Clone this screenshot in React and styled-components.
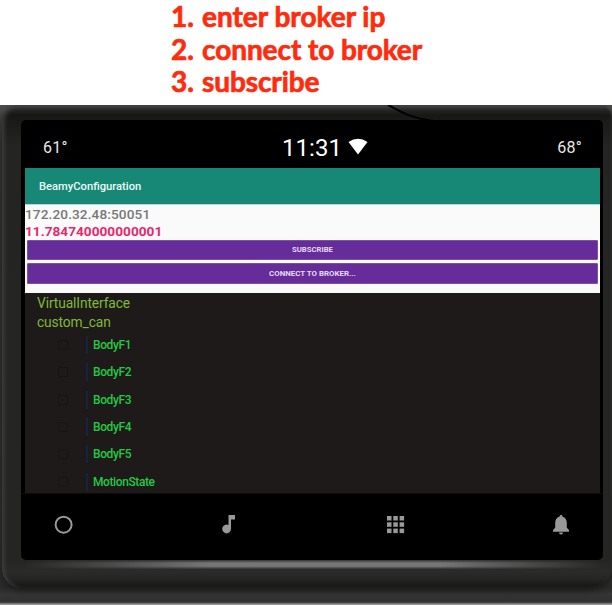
import React from "react";
import styled, { createGlobalStyle } from "styled-components";

const GlobalStyle = createGlobalStyle`
  * { box-sizing: border-box; }
  body { margin: 0; background: #fff; font-family: Roboto, sans-serif; overflow: hidden; }
`;

const Page = styled.main`
  width: 612px;
  height: 605px;
  display: flex;
  flex-direction: column;
  background: #fff;
`;

const Steps = styled.ol`
  list-style: none;
  margin: 0;
  padding: 0 0 0 171px;
  height: 105px;
  flex: none;
  color: #ff2b0d;
  font: 700 28px/32px Lato, sans-serif;
  -webkit-text-stroke: 0.7px #ff2b0d;
`;

const Step = styled.li`
  display: grid;
  grid-template-columns: 31px auto;
  height: 32.7px;
  white-space: nowrap;
`;

const StepText = styled.span`
  letter-spacing: ${(p) => p.$spacing}px;
`;

const Bezel = styled.section`
  position: relative;
  height: 500px;
  padding: 15px 9px 0 21px;
  overflow: hidden;
  background: linear-gradient(#4c4c4c, #383838 40px, #303030 460px, #292929 482px, #353535 490px, #303030 497px, #888 499px, #aaa);
`;

const BezelFace = styled.div`
  position: absolute;
  inset: 1px 0 17px 2px;
  border-radius: 17px 12px 22px 20px;
  background: linear-gradient(#444 0, #252525 4px, #171715 9px, #1a1a18 14px, #242523 40px, #252624 455px, #2b2b2b 465px, #252525 473px, #181816 480px);
  box-shadow: inset 4px 0 4px -2px #404040, inset -3px 0 3px -2px #2b2c29, 0 2px 7px #181816;
`;

const LowerShine = styled.div`
  position: absolute;
  left: 24px;
  right: 9px;
  top: 455px;
  height: 9px;
  background: linear-gradient(#333, #777 35%, #757575 70%, #303030);
  mask-image: linear-gradient(90deg, transparent, #000 32%, #000 72%, transparent);
`;

const Cable = styled.svg`
  position: absolute;
  left: 386px;
  top: 0;
`;

const Screen = styled.div`
  position: relative;
  width: 582px;
  height: 440px;
  display: flex;
  flex-direction: column;
  border-radius: 5px;
  background: #000;
  overflow: hidden;
`;

const StatusBar = styled.header`
  height: 48px;
  flex: none;
  display: grid;
  grid-template-columns: 1fr auto 1fr;
  align-items: center;
  padding: 7px 21px 0 22px;
`;

const Temperature = styled.span`
  color: #e8e8e8;
  font-size: 16px;
  line-height: 20px;
  letter-spacing: 0.3px;
  text-align: ${(p) => p.$align || "left"};
`;

const Clock = styled.div`
  display: flex;
  align-items: center;
  gap: 6px;
  padding-left: 25px;
  color: #fff;
  font-size: 24px;
  line-height: 28px;
  svg { transform: translateY(-1px); }
`;

const AppWindow = styled.div`
  width: 575px;
  margin-left: 4px;
  height: 325px;
  flex: none;
  display: flex;
  flex-direction: column;
  background: #1e1a19;
`;

const TitleBar = styled.h1`
  margin: 0;
  height: 36px;
  padding: 1px 0 0 14px;
  background: #188876;
  color: #eafaf7;
  font-size: 11.2px;
  line-height: 36px;
  font-weight: 500;
  letter-spacing: 0;
`;

const Connection = styled.div`
  height: 89px;
  background: #fafafa;
  padding: 2px 2px 0;
  border-top: 1px solid #b6d8d3;
`;

const Reading = styled.div`
  height: ${(p) => (p.$strong ? 18 : 15)}px;
  margin-left: -2px;
  color: ${(p) => (p.$strong ? "#e5296f" : "#777")};
  font-size: 13.6px;
  line-height: ${(p) => (p.$strong ? 18 : 15)}px;
  font-weight: ${(p) => (p.$strong ? 700 : 500)};
  letter-spacing: ${(p) => (p.$strong ? 0.04 : 0.12)}px;
`;

const Action = styled.button`
  display: block;
  width: 571px;
  height: ${(p) => p.$height}px;
  margin: 0 0 3px;
  padding: 0;
  border: 1px solid #7a50aa;
  border-radius: 1px;
  background: #652c9a;
  color: #e6daf2;
  font: 700 ${(p) => p.$size}px/1 Roboto, sans-serif;
`;

const Tree = styled.div`
  height: 200px;
  padding: 1px 0 0 12px;
  overflow: hidden;
`;

const Branch = styled.div`
  height: 18.5px;
  color: #80b936;
  font-size: 13.8px;
  line-height: 18.5px;
  letter-spacing: ${(p) => p.$spacing}px;
`;

const Signal = styled.label`
  display: grid;
  grid-template-columns: 20px 29px 7px auto;
  align-items: center;
  height: 27.45px;
  color: #22c944;
  font-size: 12px;
  font-weight: 500;
`;

const CheckSquare = styled.span`
  width: 10px;
  height: 10px;
  margin-left: 21px;
  border: 1px solid #171414;
  border-radius: 1px;
`;

const Divider = styled.i`
  width: 2px;
  height: 18px;
  margin-left: 29px;
  background: #12263d;
`;

const SignalName = styled.span`
  letter-spacing: -0.4px;
`;

const NavBar = styled.nav`
  flex: 1;
  display: flex;
  justify-content: space-between;
  align-items: flex-start;
  padding: 20px 32px 0 33px;
  border-top: 1px solid #0b0b0b;
  svg { display: block; }
`;

const signals = ["BodyF1", "BodyF2", "BodyF3", "BodyF4", "BodyF5", "MotionState"];

export default function App() {
  return (
    <>
      <GlobalStyle />
      <Page>
        <Steps>
          <Step><span>1.</span><StepText $spacing={0}>enter broker ip</StepText></Step>
          <Step><span>2.</span><StepText $spacing={-0.08}>connect to broker</StepText></Step>
          <Step><span>3.</span><StepText $spacing={-0.1}>subscribe</StepText></Step>
        </Steps>
        <Bezel>
          <BezelFace />
          <LowerShine />
          <Cable width="50" height="16" fill="none" stroke="#000" strokeWidth="2">
            <path d="M2 0C13 6 24 13 48 16" />
          </Cable>
          <Screen>
            <StatusBar>
              <Temperature>61°</Temperature>
              <Clock>
                <span>11:31</span>
                <svg width="20" height="17" viewBox="0 0 20 17"><path d="M.5 4Q10-2.5 19.5 4L10 16.5Z" fill="#fff" /></svg>
              </Clock>
              <Temperature $align="right">68°</Temperature>
            </StatusBar>
            <AppWindow>
              <TitleBar>BeamyConfiguration</TitleBar>
              <Connection>
                <Reading>172.20.32.48:50051</Reading>
                <Reading $strong>11.784740000000001</Reading>
                <Action $height={20} $size={7.7}>SUBSCRIBE</Action>
                <Action $height={21} $size={7.9}>CONNECT TO BROKER...</Action>
              </Connection>
              <Tree>
                <Branch $spacing={-0.12}>VirtualInterface</Branch>
                <Branch $spacing={-0.12}>custom_can</Branch>
                {signals.map((name) => (
                  <Signal key={name}>
                    <CheckSquare /><Divider /><span /><SignalName>{name}</SignalName>
                  </Signal>
                ))}
              </Tree>
            </AppWindow>
            <NavBar>
              <svg width="20" height="22" viewBox="0 0 20 22"><circle cx="9.6" cy="10.7" r="8" fill="none" stroke="#999" strokeWidth="2" /></svg>
              <svg width="20" height="22" viewBox="0 0 20 22" fill="#999"><path d="M8.5 1H15v4.5h-4V15a4.4 4.4 0 1 1-2.5-4Z" /></svg>
              <svg width="20" height="22" viewBox="0 0 20 22" fill="#999">
                {[2, 8.3, 14.6].map((y) => [2, 8.3, 14.6].map((x) => <rect key={`${x}-${y}`} x={x} y={y} width="4.5" height="4.5" />))}
              </svg>
              <svg width="20" height="22" viewBox="0 0 20 22" fill="#999"><path d="M8.4 2.8c0-2.3 3.2-2.3 3.2 0 2.8.7 4.2 3 4.2 6v5l2.2 2.2v1.7H2V16l2.2-2.2v-5c0-3 1.4-5.3 4.2-6ZM8 18.5h4a2 2 0 0 1-4 0Z" /></svg>
            </NavBar>
          </Screen>
        </Bezel>
      </Page>
    </>
  );
}
